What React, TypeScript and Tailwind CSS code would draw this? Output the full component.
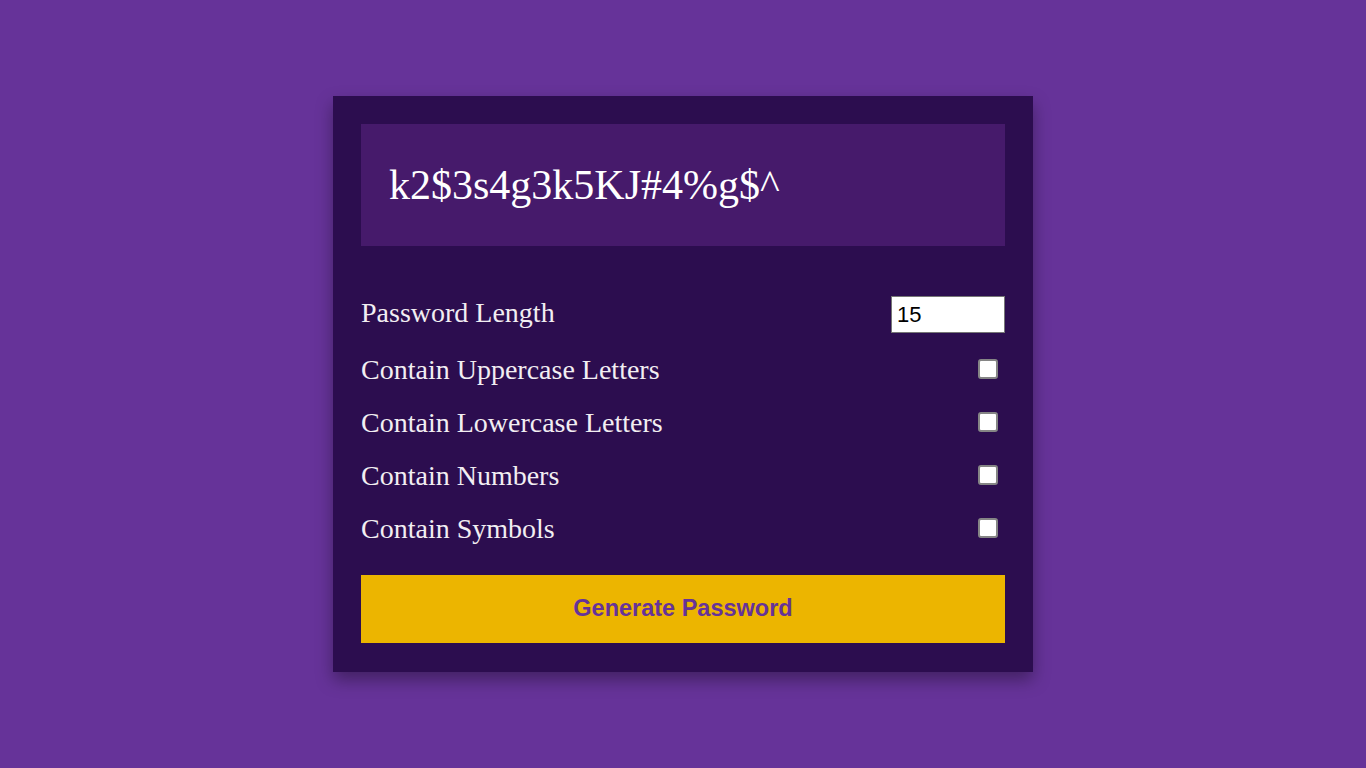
import React, { useState } from 'react';

const options = [
  'Contain Uppercase Letters',
  'Contain Lowercase Letters',
  'Contain Numbers',
  'Contain Symbols',
];

export default function App() {
  const [length, setLength] = useState('15');
  const [checked, setChecked] = useState<boolean[]>([false, false, false, false]);

  return (
    <div className="min-h-screen w-full bg-[#663399] flex items-center justify-center font-['Liberation_Serif',serif]">
      <div className="w-[700px] bg-[#2c0d4f] px-7 pt-7 pb-[29px] shadow-[0_8px_16px_rgba(0,0,0,0.35)]">
        <div className="h-[122px] bg-[#461a6b] px-7 flex items-center text-[42px] text-white">
          k2$3s4g3k5KJ#4%g$^
        </div>

        <div className="mt-[50px] flex flex-col gap-[21px] text-[28px] text-[#f2eef2]">
          <div className="flex items-center justify-between h-[37px]">
            <label className="-mt-1">Password Length</label>
            <input
              type="number"
              value={length}
              onChange={(e) => setLength(e.target.value)}
              className="w-[114px] h-[37px] bg-white border border-[#767676] px-[5px] text-[22px] text-black font-['Liberation_Sans',Arial,sans-serif] outline-none [appearance:textfield] [&::-webkit-inner-spin-button]:appearance-none"
            />
          </div>
          {options.map((label, i) => (
            <div key={label} className="flex items-center justify-between h-[32px]">
              <label>{label}</label>
              <input
                type="checkbox"
                checked={checked[i]}
                onChange={() =>
                  setChecked((c) => c.map((v, j) => (j === i ? !v : v)))
                }
                className="appearance-none w-5 h-5 mr-[7px] -mt-[2px] bg-white border-2 border-[#858585] rounded-[3px] checked:bg-[#0075ff] checked:border-[#0075ff]"
              />
            </div>
          ))}
        </div>

        <button className="mt-[30px] w-full h-[68px] bg-[#ecb500] text-[#663399] font-bold text-[23.5px] font-['Liberation_Sans',Arial,sans-serif]">
          Generate Password
        </button>
      </div>
    </div>
  );
}
